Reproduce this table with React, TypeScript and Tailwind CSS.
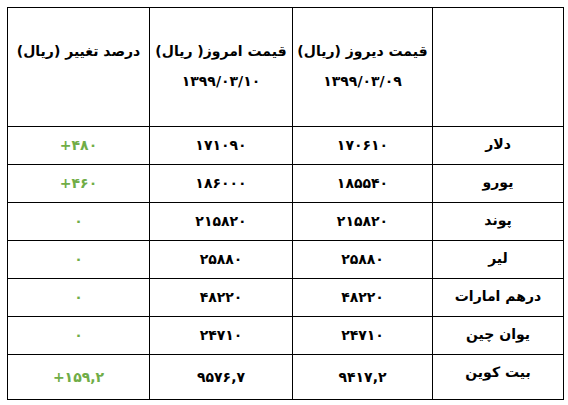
import { Fragment } from "react";

const rows = [
  { name: "دلار", yesterday: "۱۷۰۶۱۰", today: "۱۷۱۰۹۰", change: "+۴۸۰", h: "h-[37px]" },
  { name: "یورو", yesterday: "۱۸۵۵۴۰", today: "۱۸۶۰۰۰", change: "+۴۶۰", h: "h-[37px]" },
  { name: "پوند", yesterday: "۲۱۵۸۲۰", today: "۲۱۵۸۲۰", change: "۰", h: "h-[37px]" },
  { name: "لیر", yesterday: "۲۵۸۸۰", today: "۲۵۸۸۰", change: "۰", h: "h-[37px]" },
  { name: "درهم امارات", yesterday: "۴۸۲۲۰", today: "۴۸۲۲۰", change: "۰", h: "h-[37px]" },
  { name: "یوان چین", yesterday: "۲۴۷۱۰", today: "۲۴۷۱۰", change: "۰", h: "h-[37px]" },
  { name: "بیت کوین", yesterday: "۹۴۱۷,۲", today: "۹۵۷۶,۷", change: "+۱۵۹,۲", h: "h-[44px]" },
];

export default function App() {
  return (
    <div
      className="w-[568px] h-[405px] bg-white pt-[7px] pl-[7px] text-black"
      style={{ fontFamily: '"DejaVu Sans", sans-serif' }}
    >
      <div
        dir="rtl"
        className="grid w-[557px] grid-cols-[130px_139px_142px_141px] gap-px border border-black bg-black font-bold text-[14px]"
      >
        {/* header */}
        <div className="h-[118px] bg-white" />
        <div className="h-[118px] bg-white pt-[28px] text-center leading-[30px]">
          <div>قیمت دیروز (ریال)</div>
          <div>۱۳۹۹/۰۳/۰۹</div>
        </div>
        <div className="h-[118px] bg-white pt-[28px] text-center leading-[30px]">
          <div>قیمت امروز( ریال)</div>
          <div>۱۳۹۹/۰۳/۱۰</div>
        </div>
        <div className="h-[118px] bg-white pt-[28px] text-center leading-[30px]">
          <div>درصد تغییر (ریال)</div>
        </div>

        {rows.map((r) => (
          <Fragment key={r.name}>
            <div className={`${r.h} bg-white pt-[7px] text-center leading-[20px]`}>
              {r.name}
            </div>
            <div className={`${r.h} flex items-center justify-center bg-white`}>{r.yesterday}</div>
            <div className={`${r.h} flex items-center justify-center bg-white`}>{r.today}</div>
            <div className={`${r.h} flex items-center justify-center bg-white text-[#70ad47]`}>
              <span dir="ltr">{r.change}</span>
            </div>
          </Fragment>
        ))}
      </div>
    </div>
  );
}
